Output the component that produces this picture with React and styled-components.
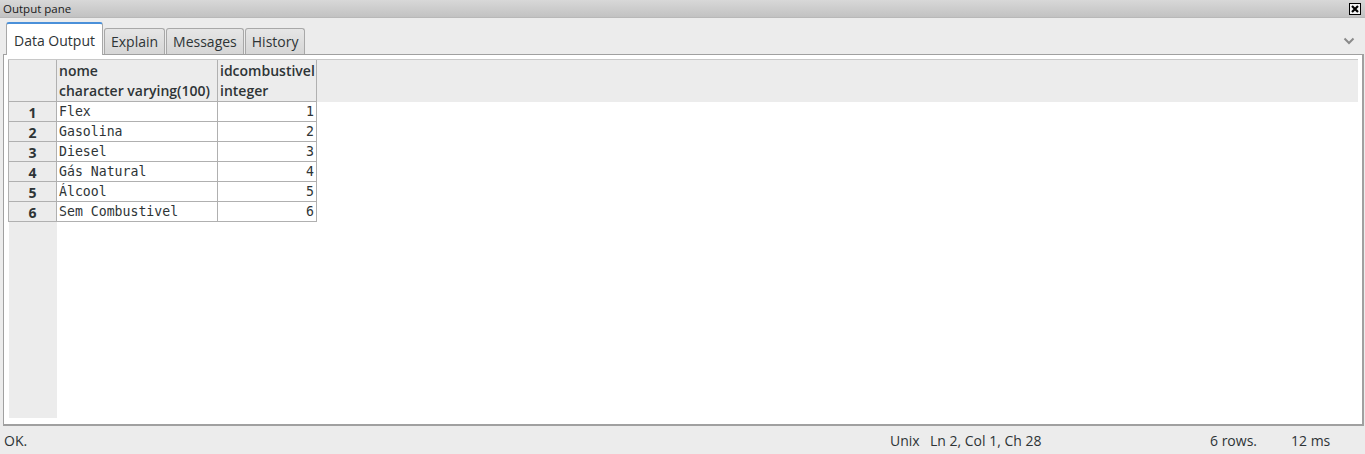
import React from "react";
import styled, { createGlobalStyle } from "styled-components";

const rows = [
	{ n: 1, nome: "Flex", id: 1 },
	{ n: 2, nome: "Gasolina", id: 2 },
	{ n: 3, nome: "Diesel", id: 3 },
	{ n: 4, nome: "Gás Natural", id: 4 },
	{ n: 5, nome: "Álcool", id: 5 },
	{ n: 6, nome: "Sem Combustivel", id: 6 },
];

const tabs = ["Data Output", "Explain", "Messages", "History"];

const App = () => {
	return (
		<Page>
			<Global />
			<TitleBar>
				<span>Output pane</span>
				<CloseBox>
					<svg width="10" height="10" viewBox="0 0 10 10">
						<path d="M2 2 L8 8 M8 2 L2 8" stroke="#000" strokeWidth="2.2" />
					</svg>
				</CloseBox>
			</TitleBar>
			<TabRow>
				{tabs.map((t, i) => (
					<Tab key={t} $active={i === 0}>
						{t}
					</Tab>
				))}
				<Chevron>
					<svg width="12" height="8" viewBox="0 0 12 8">
						<path d="M1.5 1.5 L6 6 L10.5 1.5" fill="none" stroke="#8a8a8a" strokeWidth="2" />
					</svg>
				</Chevron>
			</TabRow>
			<Panel>
				<Grid>
					<HeaderRow>
						<Corner />
						<HeadCell $w={161}>
							<div>nome</div>
							<div>character varying(100)</div>
						</HeadCell>
						<HeadCell $w={99}>
							<div>idcombustivel</div>
							<div>integer</div>
						</HeadCell>
					</HeaderRow>
					{rows.map((r) => (
						<Row key={r.n}>
							<RowNum>{r.n}</RowNum>
							<Cell $w={161}>{r.nome}</Cell>
							<Cell $w={99} $right>
								{r.id}
							</Cell>
						</Row>
					))}
					<Filler />
				</Grid>
			</Panel>
			<StatusBar>
				<span>OK.</span>
				<span>Unix</span>
				<span>Ln 2, Col 1, Ch 28</span>
				<span>6 rows.</span>
				<span>12 ms</span>
			</StatusBar>
		</Page>
	);
};

export default App;

const Global = createGlobalStyle`
	html, body {
		margin: 0;
		padding: 0;
		background: #ececec;
	}
`;

const Page = styled.div`
	width: 1365px;
	height: 454px;
	display: flex;
	flex-direction: column;
	background: #ececec;
	font-family: "Open Sans", "Noto Sans", sans-serif;
	color: #2e3436;
	overflow: hidden;
`;

const TitleBar = styled.div`
	height: 17px;
	flex: none;
	display: flex;
	align-items: center;
	justify-content: space-between;
	padding: 0 4px 0 3px;
	background: linear-gradient(#d8d8d8, #c2c2c2);
	border-bottom: 1px solid #b8b8b8;
	font-size: 11.5px;
	color: #1a1a1a;
`;

const CloseBox = styled.div`
	width: 10px;
	height: 10px;
	border: 1px solid #000;
	display: flex;
	align-items: center;
	justify-content: center;
	background: #f4f4f4;
`;

const TabRow = styled.div`
	height: 36px;
	flex: none;
	display: flex;
	align-items: flex-end;
	padding-left: 6px;
	position: relative;
`;

const Tab = styled.div`
	height: ${(p) => (p.$active ? "33px" : "26px")};
	padding: ${(p) => (p.$active ? "0 7px" : "0 6px")};
	display: flex;
	align-items: center;
	font-size: 14px;
	color: #2e3436;
	box-sizing: border-box;
	margin-right: 1px;
	border: 1px solid #a8a8a8;
	border-bottom: none;
	border-radius: 3px 3px 0 0;
	background: ${(p) => (p.$active ? "#fff" : "linear-gradient(#e6e6e6, #d6d6d6)")};
	border-top: ${(p) => (p.$active ? "2px solid #4a90d9" : "1px solid #a8a8a8")};
	position: relative;
	z-index: ${(p) => (p.$active ? 2 : 1)};
	margin-bottom: ${(p) => (p.$active ? "-1px" : "0")};
	padding-top: ${(p) => (p.$active ? "1px" : "0")};
`;

const Chevron = styled.div`
	position: absolute;
	right: 10px;
	top: 10px;
`;

const Panel = styled.div`
	flex: none;
	height: 372px;
	margin: 0 1px 0 3px;
	box-sizing: border-box;
	background: #fff;
	border: 1px solid #a0a0a0;
	border-right-width: 2px;
	border-bottom-width: 2px;
	padding: 4px 4px 6px 4px;
	display: flex;
`;

const Grid = styled.div`
	flex: 1;
	display: flex;
	flex-direction: column;
`;

const HeaderRow = styled.div`
	display: flex;
	height: 43px;
	background: #ececec;
	border-top: 1px solid #c8c8c8;
	box-sizing: border-box;
`;

const Corner = styled.div`
	width: 49px;
	box-sizing: border-box;
	border-left: 1px solid #b0b0b0;
	border-right: 1px solid #b0b0b0;
	border-bottom: 1px solid #b0b0b0;
`;

const HeadCell = styled.div`
	width: ${(p) => p.$w}px;
	box-sizing: border-box;
	border-right: 1px solid #b0b0b0;
	border-bottom: 1px solid #b0b0b0;
	padding: 1px 0 0 2px;
	font-size: 14px;
	font-weight: 600;
	line-height: 20px;
	color: #2e3436;
	white-space: nowrap;
`;

const Row = styled.div`
	display: flex;
	height: 20px;
`;

const RowNum = styled.div`
	width: 49px;
	box-sizing: border-box;
	background: #ececec;
	border-left: 1px solid #b0b0b0;
	border-right: 1px solid #b0b0b0;
	border-bottom: 1px solid #b0b0b0;
	text-align: center;
	font-size: 14px;
	font-weight: 700;
	line-height: 21px;
	color: #2e3436;
`;

const Cell = styled.div`
	width: ${(p) => p.$w}px;
	box-sizing: border-box;
	border-right: 1px solid #b0b0b0;
	border-bottom: 1px solid #b0b0b0;
	padding: 0 2px;
	text-align: ${(p) => (p.$right ? "right" : "left")};
	font-family: "DejaVu Sans Mono", monospace;
	font-size: 13.2px;
	line-height: 20px;
	color: #2e3436;
	white-space: nowrap;
`;

const Filler = styled.div`
	width: 48px;
	margin-left: 1px;
	flex: 1;
	background: #ececec;
`;

const StatusBar = styled.div`
	flex: 1;
	display: grid;
	grid-template-columns: 886px 40px 280px 81px 74px;
	align-items: center;
	padding-left: 4px;
	font-size: 14px;
	color: #2e3436;
	white-space: nowrap;
`;
